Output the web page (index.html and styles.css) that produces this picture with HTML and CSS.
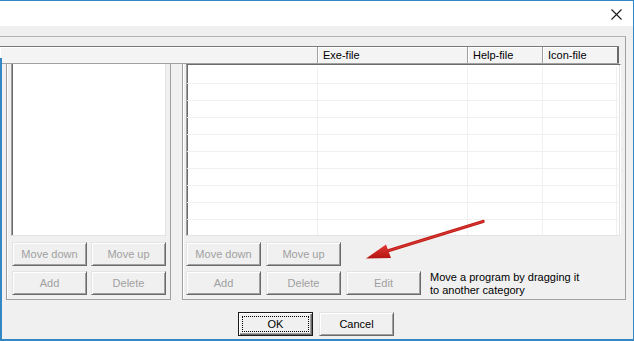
FILE: index.html
```html
<!DOCTYPE html>
<html>
<head>
<meta charset="utf-8">
<link rel="stylesheet" href="styles.css">
</head>
<body>
<div class="window">
  <div class="titlebar">
    <svg class="close" width="12" height="12" viewBox="0 0 12 12"><path d="M0.5 0.5 L10.5 10.5 M10.5 0.5 L0.5 10.5" stroke="#1a1a1a" stroke-width="1.1" fill="none"/></svg>
  </div>
  <div class="client">
    <div class="panel">
      <div class="header">
        <div class="hcell hc1"></div>
        <div class="hcell hc2">Exe-file</div>
        <div class="hcell hc3">Help-file</div>
        <div class="hcell hc4">Icon-file</div>
      </div>
      <div class="groups">
        <div class="group group-left">
          <div class="list list-left"></div>
          <div class="btns btns-left">
            <button class="btn" disabled>Move down</button>
            <button class="btn" disabled>Move up</button>
            <button class="btn" disabled>Add</button>
            <button class="btn" disabled>Delete</button>
          </div>
        </div>
        <div class="group group-right">
          <div class="list list-right">
            <div class="row"><span class="c c1"></span><span class="c c2"></span><span class="c c3"></span><span class="c c4"></span></div>
            <div class="row"><span class="c c1"></span><span class="c c2"></span><span class="c c3"></span><span class="c c4"></span></div>
            <div class="row"><span class="c c1"></span><span class="c c2"></span><span class="c c3"></span><span class="c c4"></span></div>
            <div class="row"><span class="c c1"></span><span class="c c2"></span><span class="c c3"></span><span class="c c4"></span></div>
            <div class="row"><span class="c c1"></span><span class="c c2"></span><span class="c c3"></span><span class="c c4"></span></div>
            <div class="row"><span class="c c1"></span><span class="c c2"></span><span class="c c3"></span><span class="c c4"></span></div>
            <div class="row"><span class="c c1"></span><span class="c c2"></span><span class="c c3"></span><span class="c c4"></span></div>
            <div class="row"><span class="c c1"></span><span class="c c2"></span><span class="c c3"></span><span class="c c4"></span></div>
            <div class="row"><span class="c c1"></span><span class="c c2"></span><span class="c c3"></span><span class="c c4"></span></div>
            <div class="row"><span class="c c1"></span><span class="c c2"></span><span class="c c3"></span><span class="c c4"></span></div>
          </div>
          <div class="btns btns-right">
            <button class="btn" disabled>Move down</button>
            <button class="btn" disabled>Move up</button>
            <span></span>
            <span></span>
            <button class="btn" disabled>Add</button>
            <button class="btn" disabled>Delete</button>
            <button class="btn" disabled>Edit</button>
            <div class="note">Move a program by dragging it<br>to another category</div>
          </div>
        </div>
      </div>
    </div>
    <div class="dlg-buttons">
      <button class="btn btn-default"><span class="focus">OK</span></button>
      <button class="btn btn-normal">Cancel</button>
    </div>
  </div>
  <svg class="arrow" width="634" height="341" viewBox="0 0 634 341">
    <defs>
      <linearGradient id="ag" x1="0" y1="0" x2="0" y2="1">
        <stop offset="0" stop-color="#e33a34"/>
        <stop offset="1" stop-color="#b3140f"/>
      </linearGradient>
    </defs>
    <path d="M483 221.5 L389 250.5" stroke="#c11a16" stroke-width="3.4" stroke-linecap="round" fill="none"/>
    <path d="M483 221.5 L389 250.5" stroke="#e8544d" stroke-width="1" stroke-linecap="round" fill="none" opacity="0.6"/>
    <polygon points="366,258.5 386,244.5 391,258" fill="url(#ag)"/>
  </svg>
</div>
</body>
</html>
```

FILE: styles.css
```css
html, body {
  margin: 0;
  padding: 0;
}
body {
  width: 634px;
  height: 341px;
  overflow: hidden;
  background: #f0f0f0;
  font-family: "Liberation Sans", Arial, sans-serif;
  font-size: 11px;
  color: #000;
}
.window {
  position: relative;
  width: 634px;
  height: 341px;
  box-sizing: border-box;
  border-top: 1px solid #3486c4;
  border-right: 1px solid #3486c4;
  border-bottom: 2px solid #3486c4;
  display: flex;
  flex-direction: column;
  background: #f0f0f0;
}
.window::before {
  content: "";
  position: absolute;
  left: 0;
  top: 57px;
  bottom: -2px;
  width: 2px;
  background: #3486c4;
  z-index: 3;
}
.titlebar {
  height: 25px;
  background: #fff;
  display: flex;
  justify-content: flex-end;
  align-items: flex-start;
  flex: none;
}
.close {
  margin-top: 8px;
  margin-right: 10px;
}
.client {
  flex: 1;
  display: flex;
  flex-direction: column;
}
.panel {
  margin-top: 10px;
  width: 626px;
  box-sizing: border-box;
  border-top: 1px solid #b4b4b4;
  border-right: 1px solid #a0a0a0;
  padding-top: 9px;
}
.header {
  display: flex;
  height: 16px;
  border-top: 1px solid #7a7a7a;
  border-bottom: 1px solid #a0a0a0;
  background: #f4f4f4;
  width: 619px;
}
.hcell {
  box-sizing: border-box;
  height: 16px;
  line-height: 16px;
  padding-left: 5px;
  border-right: 1px solid #a0a0a0;
  white-space: nowrap;
  box-shadow: inset 1px 1px #fff;
}
.hc1 { width: 318px; }
.hc2 { width: 150px; }
.hc3 { width: 75px; }
.hc4 { width: 76px; border-right: 2px solid #6a6a6a; }
.groups {
  display: flex;
  height: 236px;
}
.group {
  box-sizing: border-box;
  border-left: 1px solid #a0a0a0;
  border-bottom: 1px solid #a0a0a0;
  box-shadow: inset 1px 0 #fff;
  display: flex;
  flex-direction: column;
}
.group-left {
  margin-left: 6px;
  width: 165px;
  border-right: 1px solid #a0a0a0;
  padding-left: 4px;
}
.group-right {
  margin-left: 11px;
  width: 443px;
  padding-left: 3px;
}
.list {
  box-sizing: border-box;
  background: #fff;
  height: 172px;
  flex: none;
  overflow: hidden;
}
.list-left {
  width: 155px;
  border-left: 1px solid #a0a0a0;
  border-right: 1px solid #e3e3e3;
  border-bottom: 1px solid #e3e3e3;
  box-shadow: inset 1px 0 #6a6a6a;
}
.list-right {
  width: 435px;
  border-left: 1px solid #a0a0a0;
  border-top: 1px solid #6a6a6a;
  border-right: 1px solid #fff;
  border-bottom: 1px solid #e3e3e3;
  box-shadow: inset 1px 0 #6a6a6a, inset -1px 0 #e3e3e3;
  padding-top: 2px;
}
.row {
  display: flex;
  height: 16px;
  border-bottom: 1px solid #f0f0f0;
}
.c {
  box-sizing: border-box;
  border-right: 1px solid #f0f0f0;
  height: 16px;
}
.c1 { width: 131px; }
.c2 { width: 150px; }
.c3 { width: 75px; }
.c4 { width: 74px; }
.btns {
  display: grid;
  grid-template-columns: 75px 75px;
  grid-auto-rows: 24px;
  column-gap: 4px;
  row-gap: 5px;
  margin-top: 6px;
}
.btns-left {
  margin-left: 1px;
}
.btns-right {
  grid-template-columns: 75px 75px 75px auto;
  column-gap: 5px;
}
.btn {
  box-sizing: border-box;
  margin: 0;
  padding: 0;
  width: 75px;
  height: 24px;
  font-family: "Liberation Sans", Arial, sans-serif;
  font-size: 11px;
  background: #f0f0f0;
  border: 1px solid;
  border-color: #e3e3e3 #6a6a6a #6a6a6a #e3e3e3;
  box-shadow: inset 1px 1px #fff, inset -1px -1px #a0a0a0;
  color: #000;
}
.btn:disabled {
  color: #a0a0a0;
}
.note {
  margin-left: 4px;
  line-height: 13px;
  white-space: nowrap;
  color: #000;
}
.dlg-buttons {
  display: flex;
  justify-content: center;
  gap: 6px;
  margin-top: 12px;
  padding-right: 1px;
}
.btn-default {
  border-color: #1a1a1a;
  box-shadow: inset 1px 1px #fff, inset -1px -1px #6a6a6a, inset -2px -2px #a0a0a0;
  display: flex;
  padding: 3px;
}
.focus {
  flex: 1;
  border: 1px dotted #000;
  display: flex;
  align-items: center;
  justify-content: center;
}
.arrow {
  position: absolute;
  left: 0;
  top: -1px;
  pointer-events: none;
  z-index: 4;
}
```
